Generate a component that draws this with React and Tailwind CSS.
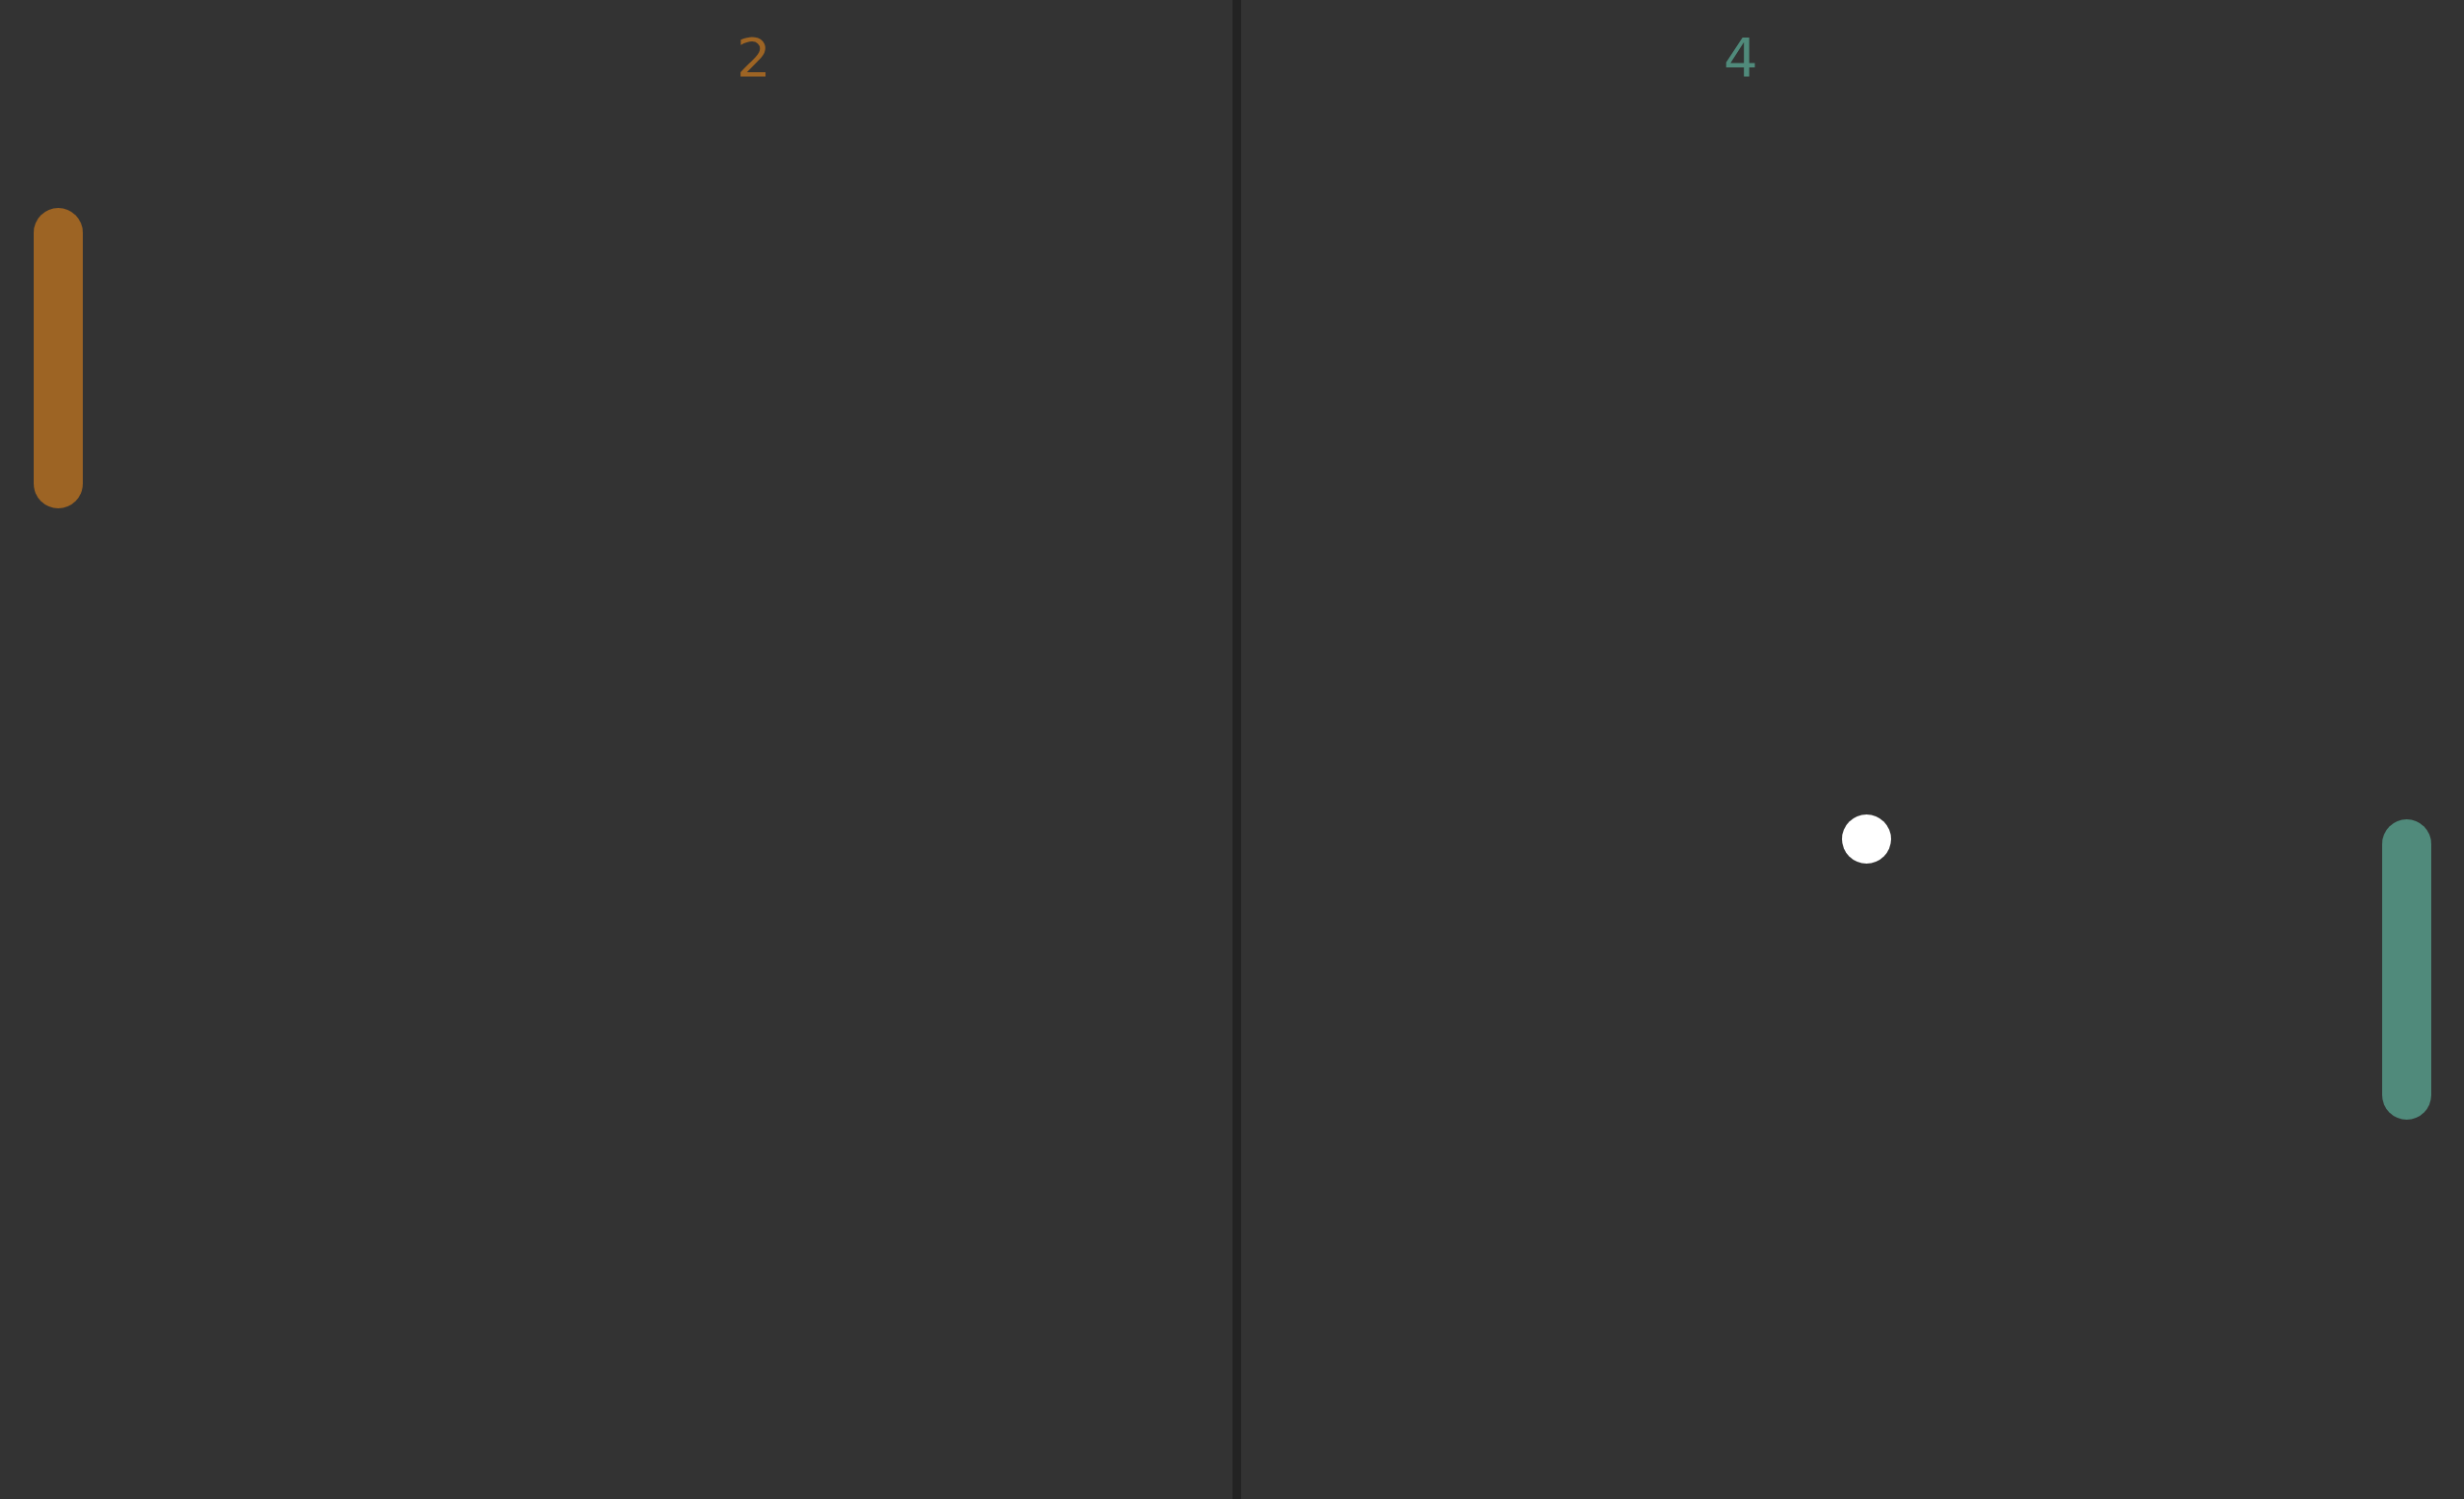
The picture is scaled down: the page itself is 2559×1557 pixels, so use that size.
export default function App() {
  return (
    <div className="relative flex h-[1557px] w-full overflow-hidden bg-[#333333] font-['DejaVu_Sans',sans-serif]">
      {/* court halves */}
      <div className="relative w-[1280px] h-full">
        <span className="absolute left-[765px] top-[32px] text-[56px] leading-none text-[#9d6424]">
          2
        </span>
      </div>
      <div className="w-[9px] h-full bg-[#232323]" />
      <div className="relative flex-1 h-full">
        <span className="absolute left-[501px] top-[32px] text-[56px] leading-none text-[#508a7b]">
          4
        </span>
      </div>

      {/* paddles + ball */}
      <div className="absolute left-[35px] top-[216px] w-[51px] h-[312px] rounded-full bg-[#9d6424]" />
      <div className="absolute left-[2474px] top-[851px] w-[51px] h-[312px] rounded-full bg-[#508a7b]" />
      <div className="absolute left-[1913px] top-[846px] w-[51px] h-[51px] rounded-full bg-white" />
    </div>
  );
}
